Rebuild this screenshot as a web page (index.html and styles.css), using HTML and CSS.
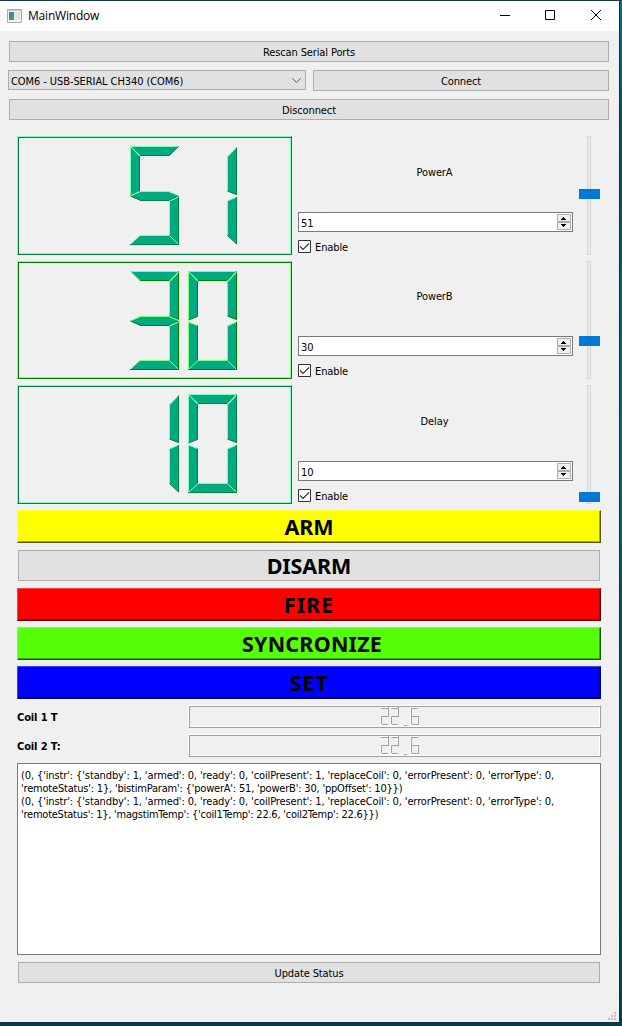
FILE: index.html
```html
<!DOCTYPE html>
<html lang="en">
<head>
<meta charset="utf-8">
<title>MainWindow</title>
<link rel="stylesheet" href="styles.css">
</head>
<body>
<svg class="defs" width="0" height="0" aria-hidden="true">
  <defs>
    <g id="s-top"><path class="f" d="M0 0H49L39 10H10Z"/><path class="l" d="M10 9.5L.5 .5H48.5"/><path class="d" d="M48.5 .5L39 9.5H10"/></g>
    <g id="s-ul"><path class="f" d="M0 0L10 10V45L0 49Z"/><path class="l" d="M.5 49V.5L9.5 10"/><path class="d" d="M9.5 10V45.5L.5 49"/></g>
    <g id="s-ur"><path class="f" d="M49 1L39 11V45L49 49Z"/><path class="l" d="M48.5 1.5L39.500 11V45"/><path class="d" d="M39.500 45L48.500 48.500V1.500"/></g>
    <g id="s-mid"><path class="f" d="M0 50L10 46H39L49 50L39 55H11Z"/><path class="l" d="M.5 50L10 45.500H39.500L48.500 49.500"/><path class="d" d="M.5 50L11 54.500H38.500L48.500 50"/></g>
    <g id="s-ll"><path class="f" d="M0 51L10 55V89L0 99Z"/><path class="l" d="M9.500 54.500L.5 51V98"/><path class="d" d="M9.500 54.500V89.500L.5 98.500"/></g>
    <g id="s-lr"><path class="f" d="M49 51L39 55V89L49 98Z"/><path class="l" d="M48.500 51L39.500 55V89.500"/><path class="d" d="M39.500 89.500L48.500 98V51"/></g>
    <g id="s-bot"><path class="f" d="M0 99L10 89.500H39L49 99Z"/><path class="l" d="M.5 98L10 89.500H39.500L48.500 98"/><path class="d" d="M0 98.500H49"/></g>
    <g id="n0"><use href="#s-bot"/><use href="#s-top"/><use href="#s-ul"/><use href="#s-ur"/><use href="#s-ll"/><use href="#s-lr"/><path class="l" d="M1 1L10 10M39.500 89.500L48 98M1 98L10 89.500M48 1L39.500 10"/></g>
    <g id="n1"><use href="#s-ur"/><use href="#s-lr"/></g>
    <g id="n3"><use href="#s-bot"/><use href="#s-top"/><use href="#s-ur"/><use href="#s-mid"/><use href="#s-lr"/><path class="l" d="M39.500 89.500L48 98M39.500 54.500L48.500 51M48 1L39.500 10"/></g>
    <g id="n5"><use href="#s-bot"/><use href="#s-top"/><use href="#s-mid"/><use href="#s-ul"/><use href="#s-lr"/><path class="l" d="M1 1L10 10M39.500 89.500L48 98M.5 49.500L10 45.500"/></g>
    <g id="t2"><path class="w" d="M0 1.500H8M7.500 3V9M0 9.500H2M.5 10V19M0 19.500H9"/><path class="g" d="M1 2.500H8M8.500 1V10M1 10.500H9M1.500 11V18M2 18.500H8"/></g>
    <g id="t6"><path class="w" d="M1 1.500H8M.5 2V19M2 9.500H8M0 19.500H9M7.500 12V18"/><path class="g" d="M2 2.500H8M1.500 2V18M2 10.500H9M8.500 11V19M2 18.500H8"/></g>
    <g id="temp"><use href="#t2"/><use href="#t2" x="10"/><path class="w" d="M24 18.500H26"/><path class="g" d="M24 19.500H27"/><use href="#t6" x="30"/></g>
  </defs>
</svg>

<main class="window">
  <header class="titlebar">
    <svg class="app-icon" width="15" height="14" viewBox="0 0 15 14">
      <defs><linearGradient id="ig" x2="1" y2="1"><stop stop-color="#3f7fa8"/><stop offset="1" stop-color="#459c6c"/></linearGradient></defs>
      <path fill="#f4f4f4" stroke="#a8a8a8" d="M.5 .5h14v13H.5z"/><path fill="#c9cfd1" d="M1 1h13v1H1z"/>
      <path fill="url(#ig)" d="M2 3h5v8H2z"/><path fill="#dcdcdc" d="M8 3h2v8H8zM11 3h2v8h-2z"/>
    </svg>
    <span class="title">MainWindow</span>
    <svg class="caption" width="104" height="12" viewBox="0 0 104 12" fill="none" stroke="#000">
      <path d="M0 6.500H10"/><path d="M45.500 1.500H54.500V10.500H45.500Z"/><path d="M91 1L101 11M101 1L91 11"/>
    </svg>
  </header>

  <section class="serial">
    <button class="btn">Rescan Serial Ports</button>
    <div class="port-row">
      <div class="combo"><span>COM6 - USB-SERIAL CH340 (COM6)</span>
        <svg width="9" height="6" viewBox="0 0 9 6" fill="none" stroke="#555"><path d="M.5 .5L4.500 4.500L8.500 .5"/></svg></div>
      <button class="btn">Connect</button>
    </div>
    <button class="btn">Disconnect</button>
  </section>

  <section class="panel">
    <div class="channel tall">
      <div class="lcd"><svg width="273" height="110" viewBox="0 0 273 110"><use href="#n5" x="112" y="9"/><use href="#n1" x="170" y="9"/></svg></div>
      <div class="controls"><div class="name">PowerA</div>
        <div class="spin"><span>51</span><svg width="14" height="16" viewBox="0 0 14 16"><path fill="#f0f0f0" stroke="#acacac" d="M.5 .5h13v7H.5zM.5 8.500h13v7H.5z"/><path d="M4 6h5v-1H8V4H7V3H6v1H5v1H4zM4 10h5v1H8v1H7v1H6v-1H5v-1H4z"/></svg></div>
        <label class="check"><svg width="13" height="13" viewBox="0 0 13 13"><path fill="#fff" stroke="#333" d="M.5 .5h12v12H.5z"/><path fill="none" stroke="#333" stroke-width="1.200" d="M2 6.500L5 9.500L11 3.500"/></svg><span>Enable</span></label></div>
      <div class="slider"><i class="handle" style="top:53px"></i></div>
    </div>
    <div class="channel green">
      <div class="lcd"><svg width="273" height="110" viewBox="0 0 273 110"><use href="#n3" x="112" y="9"/><use href="#n0" x="170" y="9"/></svg></div>
      <div class="controls"><div class="name">PowerB</div>
        <div class="spin"><span>30</span><svg width="14" height="16" viewBox="0 0 14 16"><path fill="#f0f0f0" stroke="#acacac" d="M.5 .5h13v7H.5zM.5 8.500h13v7H.5z"/><path d="M4 6h5v-1H8V4H7V3H6v1H5v1H4zM4 10h5v1H8v1H7v1H6v-1H5v-1H4z"/></svg></div>
        <label class="check"><svg width="13" height="13" viewBox="0 0 13 13"><path fill="#fff" stroke="#333" d="M.5 .5h12v12H.5z"/><path fill="none" stroke="#333" stroke-width="1.200" d="M2 6.500L5 9.500L11 3.500"/></svg><span>Enable</span></label></div>
      <div class="slider"><i class="handle" style="top:75px"></i></div>
    </div>
    <div class="channel tall">
      <div class="lcd"><svg width="273" height="110" viewBox="0 0 273 110"><use href="#n1" x="112" y="8"/><use href="#n0" x="170" y="8"/></svg></div>
      <div class="controls"><div class="name">Delay</div>
        <div class="spin"><span>10</span><svg width="14" height="16" viewBox="0 0 14 16"><path fill="#f0f0f0" stroke="#acacac" d="M.5 .5h13v7H.5zM.5 8.500h13v7H.5z"/><path d="M4 6h5v-1H8V4H7V3H6v1H5v1H4zM4 10h5v1H8v1H7v1H6v-1H5v-1H4z"/></svg></div>
        <label class="check"><svg width="13" height="13" viewBox="0 0 13 13"><path fill="#fff" stroke="#333" d="M.5 .5h12v12H.5z"/><path fill="none" stroke="#333" stroke-width="1.200" d="M2 6.500L5 9.500L11 3.500"/></svg><span>Enable</span></label></div>
      <div class="slider"><i class="handle" style="top:107px"></i></div>
    </div>

    <button class="action arm">ARM</button>
    <button class="action disarm">DISARM</button>
    <button class="action fire">FIRE</button>
    <button class="action sync">SYNCRONIZE</button>
    <button class="action set">SET</button>

    <div class="coil"><b>Coil 1 T</b><div class="mini"><svg width="411" height="21" viewBox="0 0 411 21"><use href="#temp" x="191" y="0"/></svg></div></div>
    <div class="coil"><b>Coil 2 T:</b><div class="mini"><svg width="411" height="21" viewBox="0 0 411 21"><use href="#temp" x="191" y="0"/></svg></div></div>

    <div class="log">
      <div class="l1">(0, {'instr': {'standby': 1, 'armed': 0, 'ready': 0, 'coilPresent': 1, 'replaceCoil': 0, 'errorPresent': 0, 'errorType': 0,</div>
      <div class="l2">'remoteStatus': 1}, 'bistimParam': {'powerA': 51, 'powerB': 30, 'ppOffset': 10}})</div>
      <div class="l1">(0, {'instr': {'standby': 1, 'armed': 0, 'ready': 0, 'coilPresent': 1, 'replaceCoil': 0, 'errorPresent': 0, 'errorType': 0,</div>
      <div class="l3">'remoteStatus': 1}, 'magstimTemp': {'coil1Temp': 22.6, 'coil2Temp': 22.6}})</div>
    </div>
    <button class="btn update">Update Status</button>
  </section>
  <footer class="status">
    <svg width="8" height="8" viewBox="0 0 8 8" fill="#bfbfbf"><path d="M6 0h2v2H6zM3 3h2v2H3zM6 3h2v2H6zM0 6h2v2H0zM3 6h2v2H3zM6 6h2v2H6z"/></svg>
  </footer>
</main>
</body>
</html>
```

FILE: styles.css
```css
* { box-sizing: border-box; }

body {
  margin: 0;
  width: 622px;
  height: 1026px;
  padding-top: 1px;
  overflow: hidden;
  background: linear-gradient(to bottom, #00758a 0, #00505e 140px, #00606c 280px, #006d77 430px, #00555f 620px, #004552 1000px, #003f4c 100%);
  box-shadow: inset 0 1px #173a4a;
  font: 11px/13px "DejaVu Sans Condensed", "DejaVu Sans", sans-serif;
  letter-spacing: -.12px;
  color: #000;
}

.defs { position: absolute; }
svg { display: block; flex: none; }

.window {
  display: flex;
  flex-direction: column;
  width: 619px;
  height: 1021px;
  background: #f0f0f0;
  box-shadow: 1px 1px #12303c;
}

.titlebar {
  display: flex;
  align-items: center;
  height: 30px;
  padding: 0 15px 0 7px;
  background: #fff;
}
.title {
  flex: 1;
  margin-left: 6px;
  font: 12px/16px "Open Sans", sans-serif;
  letter-spacing: -.2px;
}
.app-icon { margin-top: -1px; }
.caption { margin-top: -2px; }

.serial {
  display: flex;
  flex-direction: column;
  gap: 8px;
  padding: 10px 10px 0 9px;
}
.port-row {
  display: flex;
  align-items: flex-start;
  gap: 7px;
  margin-left: -1px;
}
.port-row .btn { flex: 1; }

.btn {
  height: 21px;
  padding: 2px 0 0;
  border: 1px solid #adadad;
  border-radius: 0;
  background: #e1e1e1;
  font: inherit;
  letter-spacing: inherit;
  color: inherit;
  text-align: center;
}
.combo {
  display: flex;
  align-items: center;
  justify-content: space-between;
  width: 298px;
  height: 20px;
  padding: 1px 4px 0 2px;
  border: 1px solid #adadad;
  background: #e1e1e1;
}
.combo span { padding-top: 2px; letter-spacing: -.08px; }

.panel {
  display: flex;
  flex-direction: column;
  width: 584px;
  margin: 16px 0 0 17px;
}

.channel {
  --light: #7fffbf;
  --dark: #007f3f;
  display: flex;
  height: 118px;
  margin-bottom: 6px;
}
.channel.tall { height: 119px; }
.channel.green {
  --light: #7fff7f;
  --dark: #007f00;
}
.lcd {
  width: 275px;
  border: 1px solid;
  border-color: var(--light) var(--dark) var(--dark) var(--light);
  box-shadow: inset 1px 1px var(--dark), inset -1px -1px var(--light);
}
.f { fill: #00aa7f; }
.l { fill: none; stroke: var(--light); }
.d { fill: none; stroke: var(--dark); }

.controls {
  display: flex;
  flex-direction: column;
  width: 275px;
  margin-left: 6px;
}
.name {
  display: flex;
  flex: 1;
  align-items: center;
  justify-content: center;
  padding: 0 2px 4px 0;
}
.spin {
  display: flex;
  align-items: center;
  justify-content: space-between;
  height: 20px;
  padding: 0 1px 0 2px;
  border: 1px solid #7a7a7a;
  background: #fff;
}
.spin span { padding-top: 2px; }
.check {
  display: flex;
  align-items: center;
  gap: 4px;
  height: 13px;
  margin: 8px 0 2px;
}
.check span { padding-top: 2px; }

.slider {
  position: relative;
  width: 4px;
  margin-left: 14px;
  border: 1px solid #d6d6d6;
  background: #e7eaea;
}
.handle {
  position: absolute;
  left: -9px;
  width: 21px;
  height: 10px;
  margin-top: -1px;
  background: #0078d7;
}

.action {
  height: 33px;
  margin-bottom: 6px;
  padding: 0;
  border: 1px solid;
  font: bold 21.5px/30px "Noto Sans", sans-serif;
  letter-spacing: -.1px;
  color: #000;
}
.arm {
  background: #ff0;
  border-color: #ffff3f #555500 #555500 #ffff3f;
  box-shadow: inset -1px -1px #aaaa00;
}
.disarm {
  height: 31px;
  margin: 1px 1px 7px;
  border-color: #adadad;
  background: #e1e1e1;
}
.fire {
  background: #f00;
  border-color: #ff3f3f #550000 #550000 #ff3f3f;
  box-shadow: inset -1px -1px #aa0000;
  letter-spacing: 1px;
}
.sync {
  padding-left: 6px;
  background: #55ff0a;
  border-color: #7cff4a #1c5500 #1c5500 #7cff4a;
  box-shadow: inset -1px -1px #38aa00;
  letter-spacing: .2px;
}
.set {
  background: #00f;
  border-color: #3f3fff #000055 #000055 #3f3fff;
  box-shadow: inset -1px -1px #0000aa;
  letter-spacing: .9px;
}

.coil {
  display: flex;
  align-items: center;
  justify-content: space-between;
  height: 23px;
  margin-bottom: 6px;
}
.coil b { padding-top: 2px; }
.mini {
  width: 413px;
  height: 23px;
  border: 1px solid;
  border-color: #fff #a0a0a0 #a0a0a0 #fff;
  box-shadow: inset 1px 1px #a0a0a0, inset -1px -1px #fff;
}
.w { fill: none; stroke: #fff; }
.g { fill: none; stroke: #a0a0a0; }

.log {
  height: 192px;
  padding: 5px 3px;
  border: 1px solid #7a7a7a;
  background: #fff;
  white-space: nowrap;
}
.l2 { letter-spacing: -.2px; }
.l3 { letter-spacing: -.24px; }
.update { margin: 7px 1px 0; }

.status {
  display: flex;
  flex: 1;
  align-items: flex-end;
  justify-content: flex-end;
  padding: 0 3px 2px;
}
```
